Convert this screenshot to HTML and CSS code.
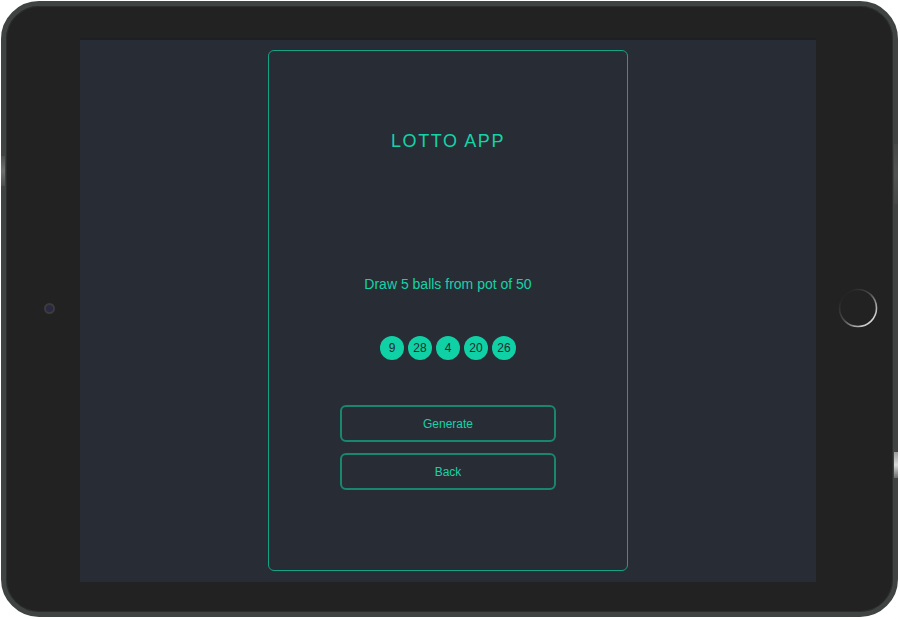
FILE: index.html
```html
<!DOCTYPE html>
<html lang="en">
<head>
<meta charset="utf-8">
<title>Lotto App</title>
<link rel="stylesheet" href="styles.css">
</head>
<body>
<div class="tablet">
  <span class="side-btn side-btn-left"></span>
  <span class="side-btn side-btn-right-top"></span>
  <span class="side-btn side-btn-right-bottom"></span>
  <div class="bezel bezel-left"><span class="camera"></span></div>
  <div class="screen">
    <div class="card">
      <h1 class="title">LOTTO APP</h1>
      <p class="desc">Draw 5 balls from pot of 50</p>
      <div class="balls">
        <span class="ball">9</span>
        <span class="ball">28</span>
        <span class="ball">4</span>
        <span class="ball">20</span>
        <span class="ball">26</span>
      </div>
      <button class="btn btn-generate">Generate</button>
      <button class="btn btn-back">Back</button>
    </div>
  </div>
  <div class="bezel bezel-right">
    <svg class="home" width="42" height="42" viewBox="0 0 42 42">
      <defs>
        <linearGradient id="hg" x1="0.15" y1="0.15" x2="0.85" y2="0.85">
          <stop offset="0" stop-color="#242424"/>
          <stop offset="0.45" stop-color="#4a4a4a"/>
          <stop offset="1" stop-color="#d4d4d4"/>
        </linearGradient>
      </defs>
      <circle cx="21" cy="21" r="18.5" fill="none" stroke="url(#hg)" stroke-width="1.6"/>
    </svg>
  </div>
</div>
</body>
</html>
```

FILE: styles.css
```css
html, body {
  margin: 0;
  padding: 0;
  background: #ffffff;
}

body {
  font-family: "Liberation Sans", Arial, sans-serif;
}

.tablet {
  position: relative;
  box-sizing: border-box;
  width: 897px;
  height: 616px;
  margin: 1px 0 0 1px;
  border: 5px solid #3f4342;
  border-radius: 38px;
  background: #222222;
  display: flex;
  box-shadow: inset 0 0 0 1px #2c2e2e;
}

.side-btn {
  position: absolute;
  width: 4px;
  background: #4a4d4c;
}
.side-btn-left {
  left: -5px;
  top: 150px;
  height: 30px;
  background: linear-gradient(#4c4f4e, #6d706f, #4c4f4e);
}
.side-btn-right-top {
  right: -5px;
  top: 138px;
  height: 60px;
  background: linear-gradient(#454847, #505352, #454847);
}
.side-btn-right-bottom {
  right: -5px;
  top: 446px;
  height: 26px;
  background: linear-gradient(#9a9c9b, #d8d9d8, #6a6c6b);
}

.bezel {
  display: flex;
  align-items: center;
}

.bezel-left {
  width: 74px;
  padding-left: 38px;
  padding-bottom: 2px;
  box-sizing: border-box;
}

.camera {
  width: 7px;
  height: 7px;
  border-radius: 50%;
  border: 2px solid #3c3c3c;
  background: #2a2842;
}

.bezel-right {
  flex: 1;
  justify-content: center;
  padding-left: 6px;
  padding-bottom: 2px;
}

.home {
  display: block;
}

.screen {
  width: 736px;
  height: 544px;
  margin-top: 32px;
  background: #282c35;
  box-shadow: inset 0 2px 0 #1d1f24;
  display: flex;
  justify-content: center;
  align-items: flex-start;
  padding-top: 12px;
  box-sizing: border-box;
}

.card {
  box-sizing: border-box;
  width: 360px;
  height: 521px;
  border: 1px solid #15a386;
  border-radius: 6px;
  display: flex;
  flex-direction: column;
  align-items: center;
  padding-top: 79px;
}

.title {
  margin: 0;
  font-size: 18px;
  line-height: 22px;
  font-weight: normal;
  letter-spacing: 1.6px;
  color: #14d3a8;
}

.desc {
  margin: 124px 0 0;
  font-size: 14px;
  line-height: 17px;
  color: #14d3a8;
}

.balls {
  margin-top: 43px;
  display: flex;
  gap: 4px;
}

.ball {
  width: 24px;
  height: 24px;
  border-radius: 50%;
  background: #0fd1a5;
  color: #1e2b2d;
  font-size: 12px;
  line-height: 24px;
  text-align: center;
}

.btn {
  box-sizing: border-box;
  width: 216px;
  height: 37px;
  border: 2px solid #19866f;
  border-radius: 6px;
  background: transparent;
  color: #14d3a8;
  font-family: "Liberation Sans", Arial, sans-serif;
  font-size: 12px;
  padding: 0;
}

.btn-generate {
  margin-top: 45px;
}

.btn-back {
  margin-top: 11px;
}
```
